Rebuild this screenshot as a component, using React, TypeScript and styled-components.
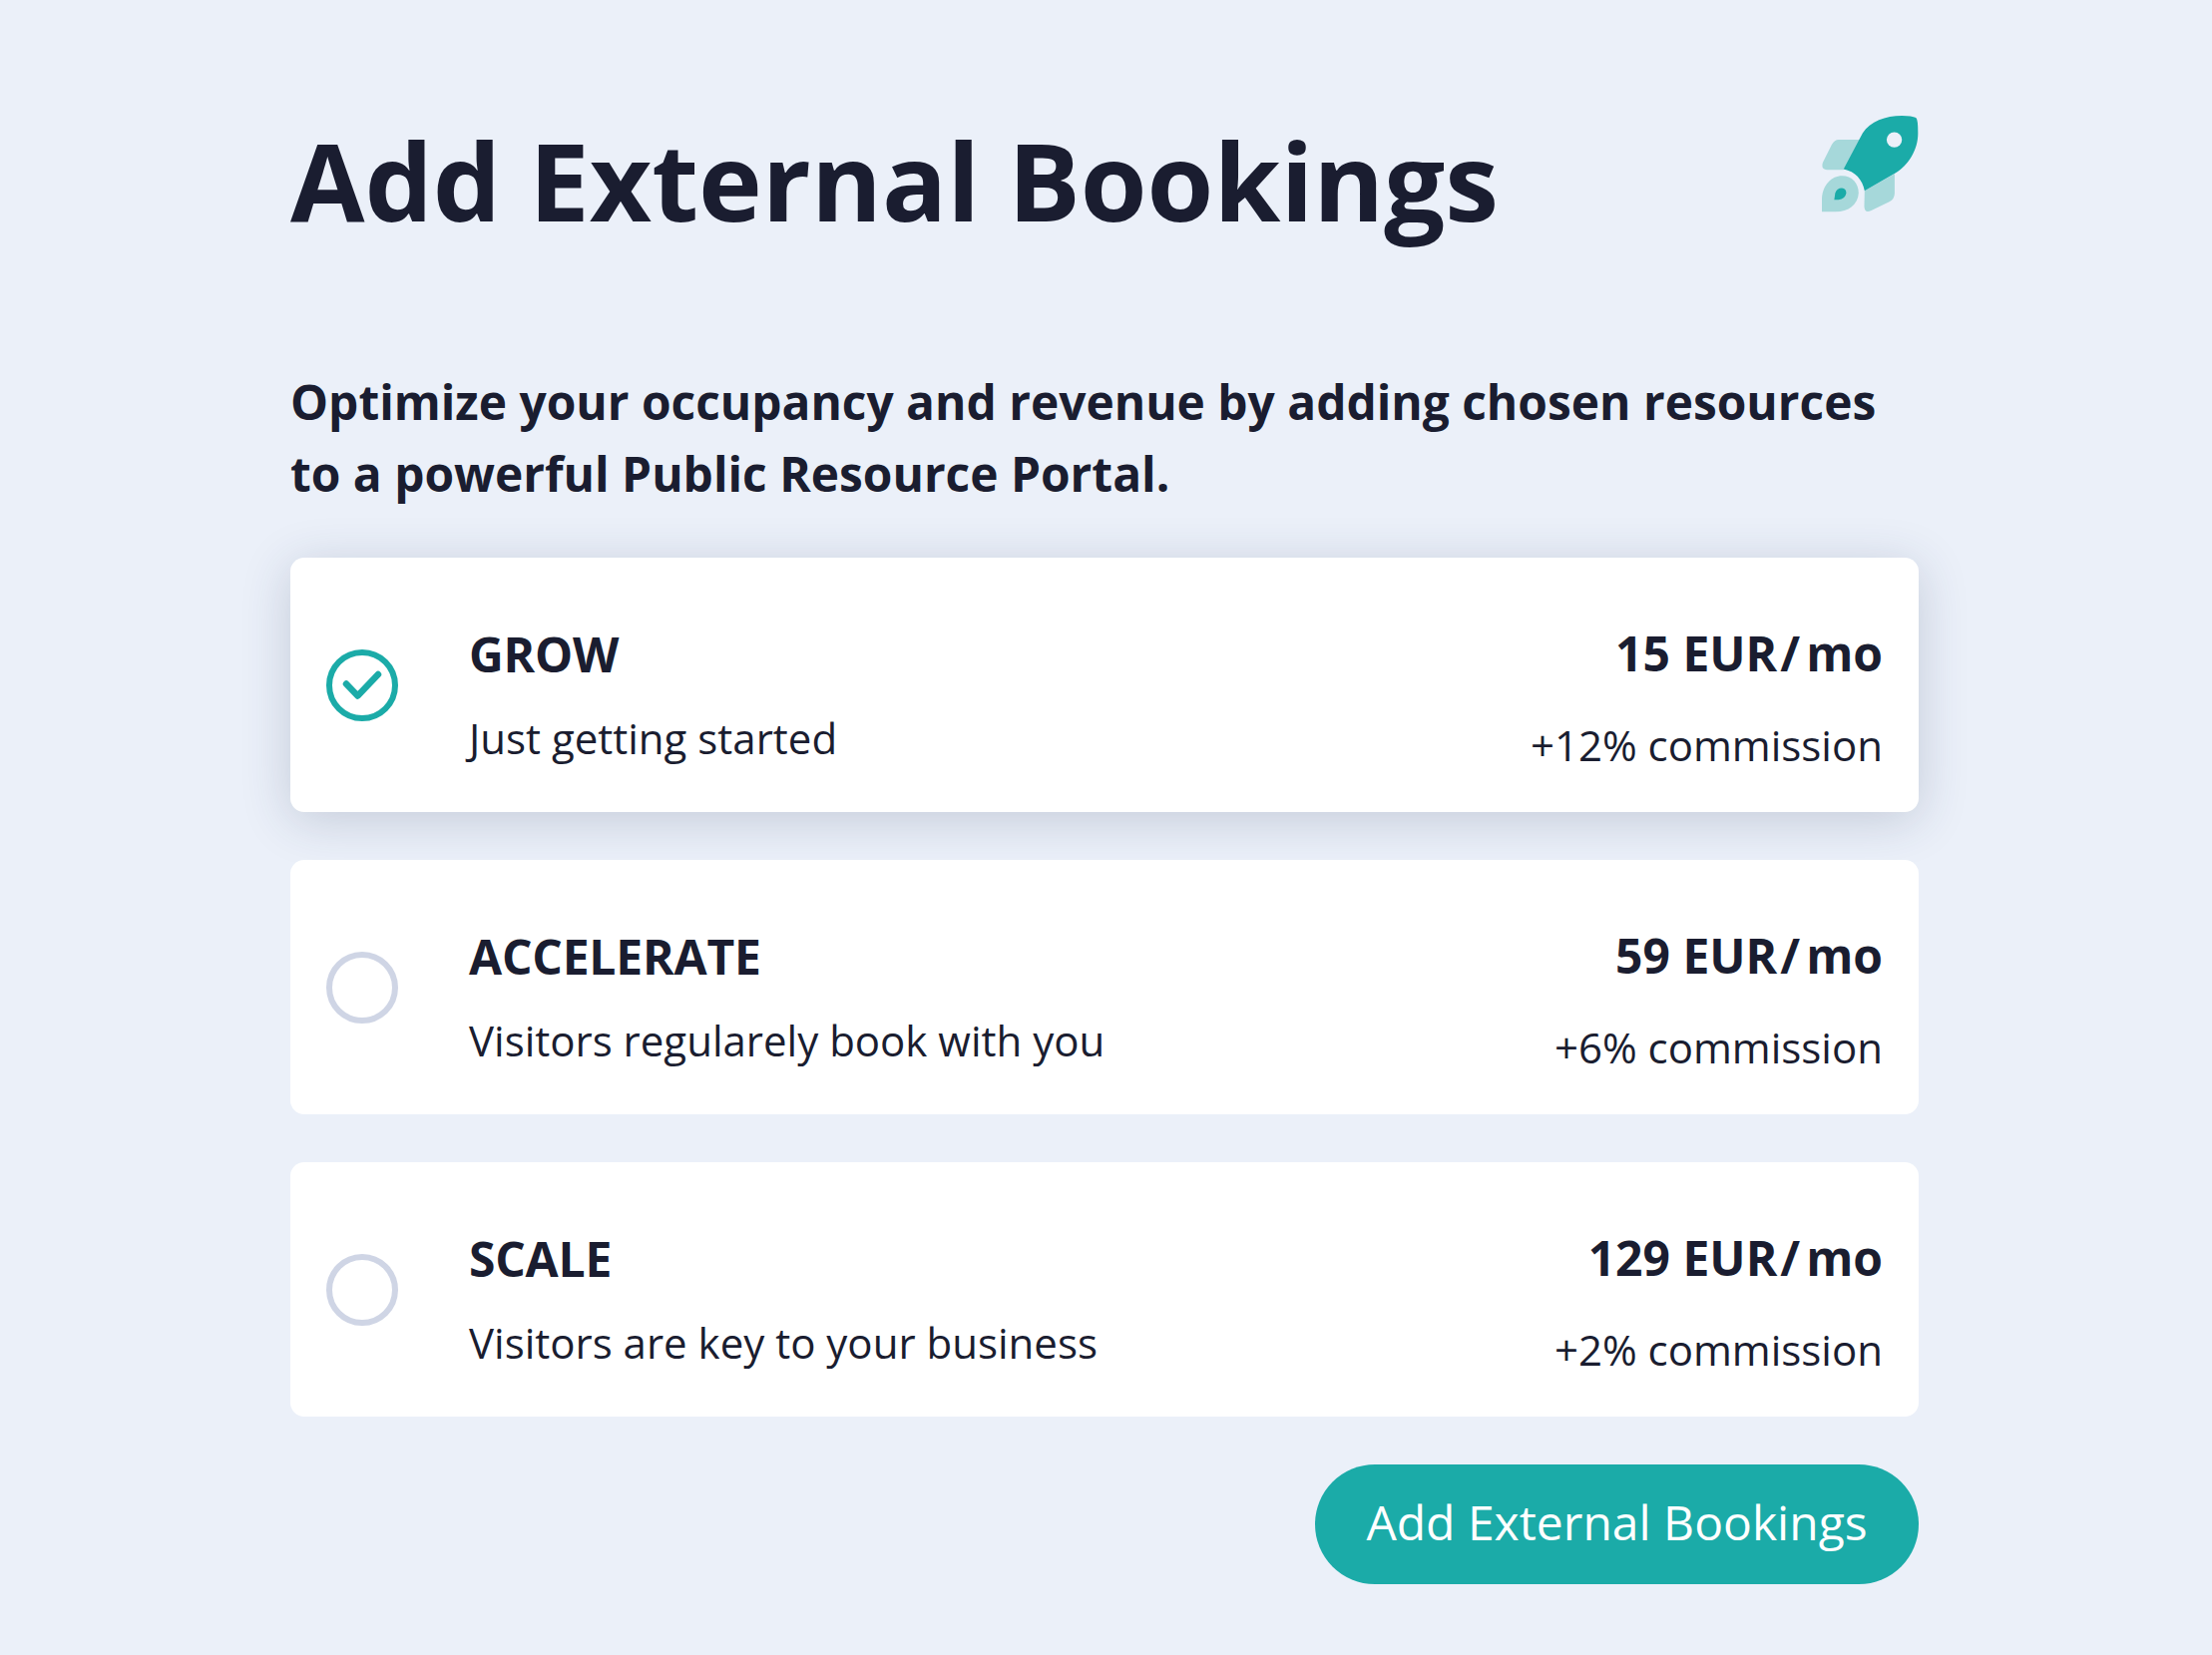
import React from 'react';
import styled, { createGlobalStyle } from 'styled-components';

const GlobalStyle = createGlobalStyle`
  html, body {
    margin: 0;
    padding: 0;
    background: #ebf0f9;
  }
`;

const Page = styled.div`
  width: 2217px;
  height: 1659px;
  box-sizing: border-box;
  padding: 116px 294px 0 291px;
  font-family: 'Open Sans', sans-serif;
  color: #1a1d30;
  display: flex;
  flex-direction: column;
`;

const Header = styled.div`
  display: flex;
  justify-content: space-between;
  align-items: flex-start;
  height: 251px;
`;

const Title = styled.h1`
  margin: -4px 0 0;
  font-size: 108px;
  line-height: 138px;
  font-weight: 700;
`;

const Rocket = styled.svg`
  width: 97px;
  height: 97px;
  display: block;
`;

const Intro = styled.p`
  margin: 0 0 48px;
  font-size: 47.87px;
  line-height: 72px;
  font-weight: 700;
`;

const Plans = styled.div`
  display: flex;
  flex-direction: column;
  gap: 48px;
`;

const Card = styled.div<{ $active?: boolean }>`
  height: 255px;
  box-sizing: border-box;
  padding: 0 36px 0 36px;
  background: #fff;
  border-radius: 14px;
  display: flex;
  align-items: center;
  box-shadow: ${(props) => (props.$active ? '0 8px 50px rgba(40, 55, 90, 0.2)' : 'none')};
`;

const Radio = styled.div`
  width: 72px;
  height: 72px;
  box-sizing: border-box;
  border: 6px solid #cfd5e5;
  border-radius: 50%;
  flex-shrink: 0;
`;

const CheckIcon = styled.svg`
  width: 72px;
  height: 72px;
  display: block;
  flex-shrink: 0;
`;

const PlanInfo = styled.div`
  margin-left: 71px;
  padding-top: 18px;
  flex: 1;
`;

const PlanName = styled.div`
  font-size: 48px;
  line-height: 66px;
  font-weight: 700;
  letter-spacing: -0.2px;
`;

const PlanText = styled.div`
  margin-top: 22px;
  font-size: 42px;
  line-height: 58px;
`;

const Pricing = styled.div`
  padding-top: 24px;
  text-align: right;
`;

const Price = styled.div`
  font-size: 48px;
  line-height: 66px;
  font-weight: 700;
`;

const Slash = styled.span`
  margin: 0 6px 0 3px;
`;

const Commission = styled.div`
  margin-top: 30px;
  font-size: 42px;
  line-height: 58px;
`;

const Footer = styled.div`
  display: flex;
  justify-content: flex-end;
  margin-top: 48px;
`;

const Button = styled.button`
  width: 605px;
  height: 120px;
  border: 0;
  border-radius: 60px;
  background: #1baba8;
  color: #fff;
  font-family: 'Open Sans', sans-serif;
  font-size: 48px;
  padding: 0 0 6px;
`;

const plans = [
  { name: 'GROW', text: 'Just getting started', amount: '15 EUR', commission: '+12% commission', active: true },
  { name: 'ACCELERATE', text: 'Visitors regularely book with you', amount: '59 EUR', commission: '+6% commission' },
  { name: 'SCALE', text: 'Visitors are key to your business', amount: '129 EUR', commission: '+2% commission' },
];

const App = () => {
  return (
    <>
      <GlobalStyle />
      <Page>
        <Header>
          <Title>Add External Bookings</Title>
          <Rocket viewBox="110 78 290 290">
            <path fill="#a6d8da" d="M228 150 L160 150 Q148 150 140 164 L113 218 Q106 238 125 240 L175 240 Z" />
            <path fill="#a6d8da" d="M328 252 L328 310 Q328 328 312 336 L258 362 Q238 372 237 350 L238 303 Z" />
            <path
              fill="#1baba8"
              d="M392 84 Q398 88 398 130 C398 180 370 225 330 250 L238 303 C232 270 210 245 175 238 L232 130 C255 95 300 78 350 78 Q380 78 392 84 Z"
            />
            <circle cx="327" cy="150" r="23" fill="#ebf0f9" />
            <path fill="#a6d8da" d="M110 366 L110 325 C112 285 140 258 170 258 C200 258 220 280 220 310 C218 345 190 366 150 366 Z" />
            <path fill="#1baba8" d="M147 330 L150 310 Q155 295 170 295 Q183 297 183 310 Q180 328 160 330 Z" />
          </Rocket>
        </Header>
        <Intro>
          Optimize your occupancy and revenue by adding chosen resources
          <br />
          to a powerful Public Resource Portal.
        </Intro>
        <Plans>
          {plans.map((plan) => (
            <Card key={plan.name} $active={plan.active}>
              {plan.active ? (
                <CheckIcon viewBox="0 0 72 72">
                  <circle cx="36" cy="36" r="33" fill="none" stroke="#1baba8" strokeWidth="6" />
                  <path d="M20 34.5 L31.5 46.5 L52 25" fill="none" stroke="#1baba8" strokeWidth="6.5" strokeLinecap="round" strokeLinejoin="round" />
                </CheckIcon>
              ) : (
                <Radio />
              )}
              <PlanInfo>
                <PlanName>{plan.name}</PlanName>
                <PlanText>{plan.text}</PlanText>
              </PlanInfo>
              <Pricing>
                <Price>
                  {plan.amount}
                  <Slash>/</Slash>mo
                </Price>
                <Commission>{plan.commission}</Commission>
              </Pricing>
            </Card>
          ))}
        </Plans>
        <Footer>
          <Button>Add External Bookings</Button>
        </Footer>
      </Page>
    </>
  );
};

export default App;
